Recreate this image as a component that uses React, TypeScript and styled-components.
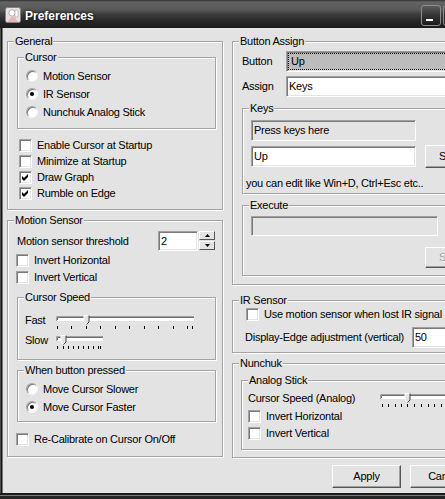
import React from 'react';
import styled, { createGlobalStyle } from 'styled-components';

const BG = '#e3e3e3';

const GlobalStyle = createGlobalStyle`
  html, body { margin: 0; padding: 0; background: ${BG}; overflow: hidden; }
  #root { width: 445px; height: 499px; }
`;

const Window = styled.div`
  width: 445px;
  height: 499px;
  display: flex;
  flex-direction: column;
  overflow: hidden;
  background: ${BG};
  color: #000;
  font-family: 'Liberation Sans', Arial, sans-serif;
  font-size: 11px;
  line-height: 13px;
  letter-spacing: -0.25px;
`;

/* title bar */
const TitleBar = styled.div`
  flex: none;
  height: 28px;
  display: flex;
  align-items: center;
  padding-left: 5px;
  background: linear-gradient(to bottom, #303030 0px, #646464 2px, #575757 10px, #3e3e3e 14px, #282828 21px, #1b1b1b 28px);
`;

const TitleText = styled.span`
  margin: 4px 0 0 4px;
  color: #fff;
  font-size: 12px;
  font-weight: bold;
  letter-spacing: 0;
  text-shadow: 0 0 3px rgba(0, 0, 0, 0.9);
`;

/* the window goes on past the right edge, so the buttons run off it */
const CaptionButtons = styled.div`
  flex: none;
  margin-left: auto;
  margin-right: -18px;
  align-self: flex-start;
  margin-top: 5px;
  display: flex;
  gap: 2px;
`;

const CaptionButton = styled.div`
  flex: none;
  width: 20px;
  height: 21px;
  box-sizing: border-box;
  border: 1px solid #8e8e8e;
  border-radius: 3px;
  background: linear-gradient(to bottom, #5c5c5c, #333 50%, #1c1c1c);
  display: flex;
  align-items: flex-end;
  padding: 0 0 3px 3px;
`;

const MinGlyph = styled.span`
  width: 9px;
  height: 4px;
  box-sizing: border-box;
  background: #fff;
  border: 1px solid #2a2a2a;
`;

/* client area */
const Frame = styled.div`
  flex: 1;
  min-height: 0;
  display: flex;
  gap: 9px;
  padding: 13px 0 0 7px;
  box-shadow: inset 1px 0 0 #4c4c4c, inset 2px 0 0 #151515, inset 3px 0 0 #777;
`;

const BottomFrame = styled.div`
  flex: none;
  height: 6px;
  background: linear-gradient(to bottom, #1c1c1c 0 2px, #7a7a7a 2px 3px, #262626 3px);
`;

const Column = styled.div<{ $w: number }>`
  flex: none;
  width: ${p => p.$w}px;
  display: flex;
  flex-direction: column;
`;

const Group = styled.div<{ $h: number; $mt?: number; $ml?: number; $mr?: number }>`
  position: relative;
  flex: none;
  box-sizing: border-box;
  height: ${p => p.$h}px;
  margin: ${p => p.$mt ?? 0}px ${p => p.$mr ?? 0}px 0 ${p => p.$ml ?? 0}px;
  border: 1px solid #a3a3a3;
  box-shadow: inset 1px 1px 0 #fff, 1px 1px 0 #fff;
  display: flex;
  flex-direction: column;
`;

const Legend = styled.span`
  position: absolute;
  top: -7px;
  left: 6px;
  padding: 0 1px;
  background: ${BG};
  white-space: nowrap;
`;

const OptionRow = styled.div<{ $h: number; $mt?: number; $indent: number }>`
  flex: none;
  display: flex;
  align-items: center;
  gap: 5px;
  height: ${p => p.$h}px;
  margin-top: ${p => p.$mt ?? 0}px;
  padding-left: ${p => p.$indent}px;
  white-space: nowrap;
`;

const RadioCircle = styled.span<{ $on?: boolean }>`
  flex: none;
  width: 12px;
  height: 12px;
  box-sizing: border-box;
  border-radius: 50%;
  background: #fff;
  border: 1px solid;
  border-color: #a0a0a0 #f4f4f4 #f4f4f4 #a0a0a0;
  box-shadow: inset 1px 1px 0 #7a7a7a;
  display: flex;
  align-items: center;
  justify-content: center;
  &::after {
    content: '';
    width: 4px;
    height: 4px;
    border-radius: 50%;
    background: ${p => (p.$on ? '#000' : 'transparent')};
  }
`;

const CheckBox = styled.span`
  flex: none;
  width: 13px;
  height: 13px;
  box-sizing: border-box;
  background: #fff;
  border: 1px solid;
  border-color: #a0a0a0 #fff #fff #a0a0a0;
  box-shadow: inset 1px 1px 0 #7a7a7a, inset -1px -1px 0 ${BG};
  display: flex;
  align-items: center;
  justify-content: center;
`;

const FieldRow = styled.div<{ $h: number; $mt?: number; $indent: number }>`
  flex: none;
  display: flex;
  align-items: center;
  height: ${p => p.$h}px;
  margin-top: ${p => p.$mt ?? 0}px;
  padding-left: ${p => p.$indent}px;
  white-space: nowrap;
`;

const Caption = styled.span<{ $w?: number }>`
  flex: none;
  width: ${p => (p.$w ? `${p.$w}px` : 'auto')};
  white-space: nowrap;
`;

const Field = styled.div<{ $w?: number; $h?: number; $bg?: string; $ml?: number; $mt?: number }>`
  flex: ${p => (p.$w ? 'none' : '1')};
  width: ${p => (p.$w ? `${p.$w}px` : 'auto')};
  height: ${p => p.$h ?? 21}px;
  margin-left: ${p => p.$ml ?? 0}px;
  margin-top: ${p => p.$mt ?? 0}px;
  box-sizing: border-box;
  background: ${p => p.$bg ?? '#fff'};
  border: 1px solid;
  border-color: #a0a0a0 #fff #fff #a0a0a0;
  box-shadow: inset 1px 1px 0 #7a7a7a, inset -1px -1px 0 ${BG};
  padding: 0 2px;
  display: flex;
  align-items: center;
  white-space: nowrap;
  overflow: hidden;
`;

const FocusRect = styled.span`
  flex: 1;
  align-self: stretch;
  margin: 1px -1px 1px -1px;
  border: 1px dotted #000;
  padding-left: 2px;
  display: flex;
  align-items: center;
`;

const PushButton = styled.div<{ $w: number; $h: number; $ml?: number; $mt?: number; $off?: boolean }>`
  flex: none;
  width: ${p => p.$w}px;
  height: ${p => p.$h}px;
  margin-left: ${p => p.$ml ?? 0}px;
  margin-top: ${p => p.$mt ?? 0}px;
  box-sizing: border-box;
  background: ${BG};
  border: 1px solid;
  border-color: #fff #555 #555 #fff;
  box-shadow: inset -1px -1px 0 #a0a0a0;
  color: ${p => (p.$off ? '#a0a0a0' : '#000')};
  text-shadow: ${p => (p.$off ? '1px 1px 0 #fff' : 'none')};
  display: flex;
  align-items: center;
  justify-content: center;
  white-space: nowrap;
`;

const Hint = styled.div`
  flex: none;
  height: 13px;
  margin-top: 10px;
  padding-left: 3px;
  white-space: nowrap;
`;

const Spin = styled.div`
  display: flex;
  gap: 1px;
  margin-left: auto;
  margin-right: 7px;
`;

const SpinButtons = styled.div`
  display: flex;
  flex-direction: column;
  gap: 1px;
`;

const SpinButton = styled.div`
  width: 16px;
  height: 9px;
  box-sizing: border-box;
  background: ${BG};
  border: 1px solid;
  border-color: #fff #555 #555 #fff;
  display: flex;
  align-items: center;
  justify-content: center;
`;

const SliderRow = styled.div<{ $mt?: number; $h: number; $indent: number }>`
  flex: none;
  display: flex;
  align-items: flex-start;
  height: ${p => p.$h}px;
  margin-top: ${p => p.$mt ?? 0}px;
  padding-left: ${p => p.$indent}px;
  white-space: nowrap;
`;

const TrackSvg = styled.svg`
  flex: none;
  display: block;
  margin-top: 1px;
`;

const ButtonBar = styled.div`
  flex: none;
  display: flex;
  gap: 9px;
  margin-top: 7px;
  padding-left: 100px;
`;

const Check = () => (
  <svg width="7" height="7" viewBox="0 0 7 7">
    <path d="M0 2 L2 4 L6 0 L6 3 L2 7 L0 5 Z" fill="#000" />
  </svg>
);

const Radio = ({ label, on, indent, mt }: { label: string; on?: boolean; indent: number; mt?: number }) => (
  <OptionRow $h={18} $indent={indent} $mt={mt}>
    <RadioCircle $on={on} />
    <span>{label}</span>
  </OptionRow>
);

const CheckOption = ({ label, on, indent, h, mt }: { label: string; on?: boolean; indent: number; h: number; mt?: number }) => (
  <OptionRow $h={h} $indent={indent} $mt={mt}>
    <CheckBox>{on && <Check />}</CheckBox>
    <span>{label}</span>
  </OptionRow>
);

const Trackbar = ({ width, ticks, thumb }: { width: number; ticks: number[]; thumb: number }) => {
  const l = thumb - 2.5;
  const r = thumb + 2.5;
  return (
    <TrackSvg width={width} height={15} viewBox={`0 0 ${width} 15`}>
      <rect x={0} y={1} width={width} height={5} fill="#fff" />
      <path d={`M0.5 6 V1.5 H${width}`} stroke="#a0a0a0" fill="none" />
      <path d={`M1.5 5 V2.5 H${width}`} stroke="#6e6e6e" fill="none" />
      {ticks.map(t => (
        <rect key={t} x={t} y={11} width={1} height={3} fill="#000" />
      ))}
      <polygon points={`${l},0.5 ${r},0.5 ${r},7 ${thumb},9.5 ${l},7`} fill={BG} />
      <path d={`M${l} 7 V0.5 H${r}`} stroke="#fff" fill="none" />
      <path d={`M${l} 7 L${thumb} 9.5`} stroke="#fff" fill="none" />
      <path d={`M${r} 0.5 V7 L${thumb} 9.5`} stroke="#404040" fill="none" />
    </TrackSvg>
  );
};

const SpinArrow = ({ up }: { up?: boolean }) => (
  <svg width="5" height="3" viewBox="0 0 5 3">
    <polygon points={up ? '2.5,0 5,3 0,3' : '0,0 5,0 2.5,3'} fill="#000" />
  </svg>
);

const AppIcon = () => (
  <svg width="16" height="16" viewBox="0 0 16 16" style={{ marginTop: 2 }}>
    <rect x="0.5" y="0.5" width="15" height="15" rx="2" fill="#e9e2e2" stroke="#8a8080" />
    <circle cx="7" cy="6" r="3.2" fill="#fff" stroke="#b9aaaa" />
    <path d="M3 15 Q5 9 10 10 L13 15 Z" fill="#e7b8b8" />
    <rect x="10" y="3" width="3" height="7" rx="1" fill="#fff" stroke="#a59a9a" strokeWidth="0.6" />
  </svg>
);

const fastTicks = [1, 15, 30, 44, 59, 73, 88, 102, 117, 131, 136];
const slowTicks = [1, 7, 12, 17, 22, 27, 32, 37, 42, 44];
const analogTicks = [2, 8, 15, 21, 27, 34, 41, 48, 54, 61, 67];

export default function App() {
  return (
    <Window>
      <GlobalStyle />
      <TitleBar>
        <AppIcon />
        <TitleText>Preferences</TitleText>
        <CaptionButtons>
          <CaptionButton>
            <MinGlyph />
          </CaptionButton>
          <CaptionButton />
        </CaptionButtons>
      </TitleBar>

      <Frame>
        <Column $w={216}>
          <Group $h={169}>
            <Legend>General</Legend>
            <Group $h={72} $mt={15} $ml={9} $mr={6}>
              <Legend>Cursor</Legend>
              <Radio label="Motion Sensor" indent={8} mt={9} />
              <Radio label="IR Sensor" indent={8} on />
              <Radio label="Nunchuk Analog Stick" indent={8} />
            </Group>
            <CheckOption label="Enable Cursor at Startup" indent={11} h={16} mt={8} />
            <CheckOption label="Minimize at Startup" indent={11} h={16} />
            <CheckOption label="Draw Graph" indent={11} h={16} on />
            <CheckOption label="Rumble on Edge" indent={11} h={16} on />
          </Group>

          <Group $h={237} $mt={10}>
            <Legend>Motion Sensor</Legend>
            <FieldRow $h={20} $mt={10} $indent={9}>
              <Caption>Motion sensor threshold</Caption>
              <Spin>
                <Field $w={40} $h={20}>2</Field>
                <SpinButtons>
                  <SpinButton>
                    <SpinArrow up />
                  </SpinButton>
                  <SpinButton>
                    <SpinArrow />
                  </SpinButton>
                </SpinButtons>
              </Spin>
            </FieldRow>
            <CheckOption label="Invert Horizontal" indent={8} h={17} mt={1} />
            <CheckOption label="Invert Vertical" indent={8} h={17} />

            <Group $h={63} $mt={11} $ml={9} $mr={6}>
              <Legend>Cursor Speed</Legend>
              <SliderRow $h={20} $mt={16} $indent={7}>
                <Caption $w={31}>Fast</Caption>
                <Trackbar width={138} ticks={fastTicks} thumb={30.5} />
              </SliderRow>
              <SliderRow $h={20} $indent={7}>
                <Caption $w={31}>Slow</Caption>
                <Trackbar width={47} ticks={slowTicks} thumb={7.5} />
              </SliderRow>
            </Group>

            <Group $h={52} $mt={10} $ml={9} $mr={6}>
              <Legend>When button pressed</Legend>
              <Radio label="Move Cursor Slower" indent={8} mt={9} />
              <Radio label="Move Cursor Faster" indent={8} on />
            </Group>

            <CheckOption label="Re-Calibrate on Cursor On/Off" indent={8} h={16} mt={9} />
          </Group>
        </Column>

        <Column $w={250}>
          <Group $h={244}>
            <Legend>Button Assign</Legend>
            <FieldRow $h={21} $mt={9} $indent={9}>
              <Caption $w={44}>Button</Caption>
              <Field $bg="#bcbcbc">
                <FocusRect>Up</FocusRect>
              </Field>
            </FieldRow>
            <FieldRow $h={21} $mt={4} $indent={9}>
              <Caption $w={44}>Assign</Caption>
              <Field>Keys</Field>
            </FieldRow>

            <Group $h={86} $mt={11} $ml={9} $mr={9}>
              <Legend>Keys</Legend>
              <Field $w={165} $bg={BG} $ml={8} $mt={11}>
                Press keys here
              </Field>
              <FieldRow $h={21} $mt={5} $indent={8}>
                <Field $w={165}>Up</Field>
                <PushButton $w={57} $h={23} $ml={9}>
                  Select
                </PushButton>
              </FieldRow>
              <Hint>you can edit like Win+D, Ctrl+Esc etc..</Hint>
            </Group>

            <Group $h={71} $mt={11} $ml={9} $mr={9}>
              <Legend>Execute</Legend>
              <Field $w={187} $h={20} $bg={BG} $ml={8} $mt={10} />
              <PushButton $w={57} $h={21} $ml={182} $mt={11} $off>
                Select
              </PushButton>
            </Group>
          </Group>

          <Group $h={53} $mt={15}>
            <Legend>IR Sensor</Legend>
            <CheckOption label="Use motion sensor when lost IR signal" indent={13} h={16} mt={5} />
            <FieldRow $h={21} $mt={5} $indent={12}>
              <Caption $w={167}>Display-Edge adjustment (vertical)</Caption>
              <Field>50</Field>
            </FieldRow>
          </Group>

          <Group $h={95} $mt={10}>
            <Legend>Nunchuk</Legend>
            <Group $h={70} $mt={16} $ml={8} $mr={8}>
              <Legend>Analog Stick</Legend>
              <SliderRow $h={16} $mt={11} $indent={6}>
                <Caption $w={132}>Cursor Speed (Analog)</Caption>
                <Trackbar width={80} ticks={analogTicks} thumb={27.5} />
              </SliderRow>
              <CheckOption label="Invert Horizontal" indent={6} h={17} />
              <CheckOption label="Invert Vertical" indent={6} h={17} />
            </Group>
          </Group>

          <ButtonBar>
            <PushButton $w={69} $h={23}>Apply</PushButton>
            <PushButton $w={69} $h={23}>Cancel</PushButton>
          </ButtonBar>
        </Column>
      </Frame>
      <BottomFrame />
    </Window>
  );
}
